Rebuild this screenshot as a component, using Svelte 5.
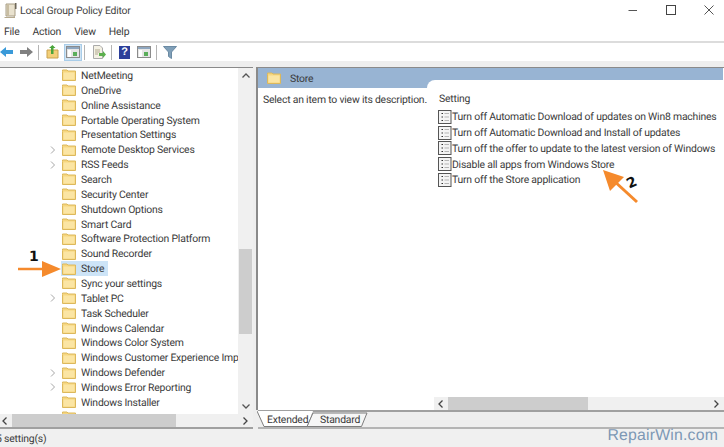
<script>
  const tree = [
    ['NetMeeting', 0], ['OneDrive', 0], ['Online Assistance', 0], ['Portable Operating System', 0],
    ['Presentation Settings', 0], ['Remote Desktop Services', 1], ['RSS Feeds', 1], ['Search', 0],
    ['Security Center', 0], ['Shutdown Options', 0], ['Smart Card', 0], ['Software Protection Platform', 0],
    ['Sound Recorder', 0], ['Store', 0], ['Sync your settings', 0], ['Tablet PC', 1], ['Task Scheduler', 0],
    ['Windows Calendar', 0], ['Windows Color System', 0], ['Windows Customer Experience Impr', 0],
    ['Windows Defender', 1], ['Windows Error Reporting', 1], ['Windows Installer', 0]
  ];
  const settings = [
    'Turn off Automatic Download of updates on Win8 machines',
    'Turn off Automatic Download and Install of updates',
    'Turn off the offer to update to the latest version of Windows',
    'Disable all apps from Windows Store',
    'Turn off the Store application'
  ];
</script>

{#snippet folder(cls)}
  <svg class={cls} viewBox="0 0 14 12" width="14" height="12">
    <path d="M0.5 2.5 V1 H5 L6 2 H13.5 V11.5 H0.5 Z" fill="#f6d67f" stroke="#dcb85c" />
    <rect x="1.5" y="3.5" width="11" height="7" fill="#fbe5a4" />
  </svg>
{/snippet}

<div class="window">
  <header class="title">
    <svg viewBox="0 0 14 16" width="14" height="16"><path d="M3 1 H12 V13 H3 Z" fill="#e9e2cf" stroke="#a89e86" /><path d="M1 14 H10 L12 13 V15 H2 Z" fill="#b5a98e" /><rect x="4" y="1" width="2" height="12" fill="#c8bda2" /><rect x="12" y="0" width="1.5" height="6" fill="#6d675a" /></svg>
    <span class="title-text">Local Group Policy Editor</span>
    <div class="winctl">
      <svg viewBox="0 0 10 10" width="10" height="10"><path d="M0.5 5.5 H9" stroke="#555" fill="none" /></svg>
      <svg viewBox="0 0 10 10" width="10" height="10"><rect x="0.5" y="0.5" width="9" height="9" stroke="#444" fill="none" /></svg>
      <svg viewBox="0 0 10 10" width="10" height="10"><path d="M0.5 0.5 L9.5 9.5 M9.5 0.5 L0.5 9.5" stroke="#555" fill="none" /></svg>
    </div>
  </header>

  <nav class="menu"><span>File</span><span>Action</span><span>View</span><span>Help</span></nav>

  <div class="toolbar">
    <svg class="tool first" viewBox="0 0 14 12" width="14" height="12"><path d="M0 6 L6 1 V4 H13 V8 H6 V11 Z" fill="#3a9ad9" /></svg>
    <svg class="tool fwd" viewBox="0 0 14 12" width="14" height="12"><path d="M14 6 L8 1 V4 H1 V8 H8 V11 Z" fill="#808080" /></svg>
    <i class="sep"></i>
    <svg class="tool up" viewBox="0 0 14 14" width="14" height="14"><path d="M1 5 H12 V13 H1 Z" fill="#f3cf78" stroke="#c9a24f" /><path d="M5 9 V3 H3 L6.5 0 L9.5 3 H7.5 V9 Z" fill="#4aa53c" /></svg>
    <span class="pressed"><svg viewBox="0 0 14 12" width="14" height="12"><rect x="0.5" y="0.5" width="13" height="11" fill="#e6e6e6" stroke="#8b8b8b" /><rect x="1" y="1" width="12" height="2" fill="#8ea6bf" /><rect x="2" y="4" width="3" height="7" fill="#fff" /><rect x="7" y="6" width="4" height="4" fill="#5bae5b" /></svg></span>
    <i class="sep s2"></i>
    <svg class="tool doc" viewBox="0 0 14 14" width="14" height="14"><path d="M1.5 0.5 H8 L10.5 3 V13.5 H1.5 Z" fill="#f4f1e4" stroke="#aaa" /><path d="M3 5 H8 M3 7 H8 M3 9 H6" stroke="#b0a98f" /><path d="M7 8 H11 V6 L14 9.5 L11 13 V11 H7 Z" fill="#5cb04e" /></svg>
    <i class="sep"></i>
    <span class="help">?</span>
    <svg class="tool view" viewBox="0 0 14 12" width="14" height="12"><rect x="0.5" y="0.5" width="13" height="11" fill="#e6e6e6" stroke="#8b8b8b" /><rect x="1" y="1" width="12" height="2" fill="#8ea6bf" /><rect x="2" y="4" width="3" height="7" fill="#fff" /><rect x="7" y="6" width="4" height="4" fill="#5bae5b" /></svg>
    <i class="sep"></i>
    <svg class="tool filter" viewBox="0 0 14 13" width="14" height="13"><path d="M0.5 0.5 H13.5 L8.5 6 V12.5 L5.5 10.5 V6 Z" fill="#7f9fb8" stroke="#6b8aa3" /></svg>
  </div>

  <main class="panes">
    <section class="left">
      <div class="tree-wrap">
        <ul class="tree">
          {#each tree as [name, expandable]}
            <li class="row">
              <span class="chev">{#if expandable}<svg viewBox="0 0 6 8" width="6" height="8"><path d="M1 0.5 L4.5 4 L1 7.5" stroke="#a6a6a6" fill="none" /></svg>{/if}</span>
              <span class="row-body" class:selected={name === 'Store'}>{@render folder('folder')}<span class="name">{name}</span></span>
            </li>
          {/each}
          <li class="row cut"><span class="chev"></span><span class="row-body">{@render folder('folder')}</span></li>
        </ul>
        <div class="vscroll">
          <svg viewBox="0 0 8 5" width="8" height="5"><path d="M0.5 4.5 L4 1 L7.5 4.5" stroke="#555" stroke-width="1.3" fill="none" /></svg>
          <div class="vtrack"><div class="vthumb"></div></div>
          <svg viewBox="0 0 8 5" width="8" height="5"><path d="M0.5 0.5 L4 4 L7.5 0.5" stroke="#555" stroke-width="1.3" fill="none" /></svg>
        </div>
      </div>
      <div class="hscroll">
        <svg viewBox="0 0 5 8" width="5" height="8"><path d="M4.5 0.5 L1 4 L4.5 7.5" stroke="#444" stroke-width="1.3" fill="none" /></svg>
        <div class="htrack"><div class="hthumb"></div></div>
        <svg viewBox="0 0 5 8" width="5" height="8"><path d="M0.5 0.5 L4 4 L0.5 7.5" stroke="#444" stroke-width="1.3" fill="none" /></svg>
      </div>
    </section>

    <section class="right">
      <div class="frame">
        <div class="band">
          {@render folder('band-folder')}
          <span>Store</span>
        </div>
        <div class="content">
          <p class="desc">Select an item to view its description.</p>
          <div class="list-card">
            <div class="list-head">Setting</div>
            <ul class="list">
              {#each settings as s}
                <li>
                  <svg viewBox="0 0 14 14" width="14" height="14"><rect x="0.5" y="0.5" width="12.5" height="13" fill="#f4f4f4" stroke="#555" /><path d="M3.5 3.5 H5 M3.5 7 H5 M3.5 10.5 H5" stroke="#333" /><path d="M6.5 3.5 H11 M6.5 7 H11 M6.5 10.5 H11" stroke="#b5b5b5" /></svg>
                  <span>{s}</span>
                </li>
              {/each}
            </ul>
          </div>
        </div>
        <div class="hscroll r">
          <svg viewBox="0 0 5 8" width="5" height="8"><path d="M4.5 0.5 L1 4 L4.5 7.5" stroke="#444" stroke-width="1.3" fill="none" /></svg>
          <div class="rthumb"></div>
          <svg class="rnext" viewBox="0 0 5 8" width="5" height="8"><path d="M0.5 0.5 L4 4 L0.5 7.5" stroke="#444" stroke-width="1.3" fill="none" /></svg>
        </div>
      </div>
      <div class="tabs">
        <svg class="tabshape" viewBox="0 0 115 17" width="115" height="17">
          <path d="M55 2 H110 L104.5 15.5 H50 Z" fill="#f6f6f6" stroke="#7d7d7d" />
          <path d="M0 0 L7 15.5 H50 L56 0 Z" fill="#fff" />
          <path d="M0 0 L7 15.5 H50 L56 2" fill="none" stroke="#7d7d7d" />
        </svg>
        <span class="tab one">Extended</span>
        <span class="tab two">Standard</span>
      </div>
    </section>
  </main>

  <footer class="status"><span>5 setting(s)</span></footer>

  <div class="note one-note">1</div>
  <svg class="arrow a1" viewBox="0 0 44 18" width="44" height="18"><path d="M0 9 H26" stroke="#f58a2c" stroke-width="2.5" /><path d="M24 1 L43 9 L24 17 Z" fill="#f58a2c" /></svg>
  <div class="note two-note">2</div>
  <svg class="arrow a2" viewBox="0 0 36 36" width="36" height="36"><path d="M10 10 L34 32" stroke="#f58a2c" stroke-width="3" /><path d="M0 0 L21 7 L7 21 Z" fill="#f58a2c" /></svg>
  <div class="mark">RepairWin.com</div>
</div>

<style>
  :global(body) { margin: 0; background: #fff; }
  ul { list-style: none; margin: 0; padding: 0; }
  .window {
    position: relative; width: 724px; height: 447px; overflow: hidden; background: #fff;
    font-family: Roboto, "Noto Sans", sans-serif; font-size: 10.4px; letter-spacing: -0.2px; color: #3a3a3a;
    text-rendering: geometricPrecision;
    display: flex; flex-direction: column;
  }
  .title { height: 21px; display: flex; align-items: center; padding-left: 3px; }
  .title svg { flex: none; }
  .title-text { margin-left: 3px; color: #444; }
  .winctl { margin-left: auto; display: flex; gap: 28px; padding-right: 10px; padding-bottom: 2px; }
  .menu { height: 20px; display: flex; gap: 13px; align-items: center; padding-left: 4px; border-bottom: 2px solid #dcdcdc; }
  .toolbar { height: 18px; display: flex; align-items: center; background: #fff; }
  .tool { flex: none; margin-left: 5px; }
  .tool.first { margin-left: 0; }
  .tool.up { margin-left: 7px; }
  .tool.doc { margin-left: 7px; }
  .tool.view { margin-left: 7px; }
  .tool.filter { margin-left: 6px; }
  .sep { width: 1px; height: 15px; background: #b4b4b4; margin-left: 5px; flex: none; }
  .sep.s2 { margin-left: 2px; }
  .pressed { flex: none; margin-left: 4px; width: 18px; height: 17px; background: #cfe3f3; border: 1px solid #a9cde9; box-sizing: border-box; display: flex; align-items: center; justify-content: center; }
  .help { flex: none; margin-left: 7px; width: 11px; height: 13px; background: #2c3f9a; color: #fff; font: bold 11px/13px "Liberation Sans", sans-serif; text-align: center; }
  .panes { flex: 1; min-height: 0; display: flex; background: #eeeeee; padding-top: 6px; gap: 3px; }
  .left { width: 253px; flex: none; display: flex; flex-direction: column; border-top: 1px solid #8a8a8a; border-bottom: 2px solid #a0a0a0; background: #fff; }
  .tree-wrap { flex: 1; min-height: 0; display: flex; overflow: hidden; }
  .tree { flex: 1; min-width: 0; overflow: hidden; padding-left: 50px; }
  .row { height: 14.87px; display: flex; align-items: center; white-space: nowrap; }
  .chev { width: 11px; flex: none; display: flex; align-items: center; }
  .row-body { display: inline-flex; align-items: center; height: 15px; padding-right: 4px; }
  .row-body.selected { background: #cde4f7; }
  .folder { flex: none; margin-right: 5px; margin-left: 1px; }
  .vscroll { width: 15px; flex: none; background: #f0f0f0; display: flex; flex-direction: column; align-items: center; padding: 5px 0; box-sizing: border-box; }
  .vtrack { flex: 1; width: 100%; padding-top: 171px; padding-bottom: 70px; box-sizing: border-box; display: flex; }
  .vthumb { flex: 1; background: #cdcdcd; margin: 0 1px; }
  .hscroll { height: 13px; flex: none; background: #f0f0f0; display: flex; align-items: center; padding: 0 5px 0 2px; }
  .htrack { flex: 1; height: 100%; padding: 0 67px 0 5px; box-sizing: border-box; display: flex; }
  .hthumb { flex: 1; background: #cdcdcd; }
  .right { flex: 1; min-width: 0; display: flex; flex-direction: column; }
  .frame { flex: 1; min-height: 0; border-top: 1px solid #8a8a8a; border-left: 2px solid #8a8a8a; display: flex; flex-direction: column; background: #fff; }
  .band { height: 20px; background: #98b4d3; display: flex; align-items: center; padding-left: 9px; gap: 9px; margin-right: 1px; }
  .band-folder { flex: none; }
  .content { flex: 1; min-height: 0; display: flex; padding-left: 5px; }
  .desc { margin: 5px 0 0; width: 164px; flex: none; white-space: nowrap; }
  .list-card { flex: 1; margin-top: -8px; background: #fff; border-top-left-radius: 8px; padding-left: 12px; }
  .list-head { margin-top: 8px; height: 21px; display: flex; align-items: center; }
  .list li { height: 15.75px; display: flex; align-items: center; gap: 0; white-space: nowrap; margin-left: -1px; }
  .list svg { flex: none; }
  .hscroll.r { margin-left: 176px; padding: 0 5px 0 4px; }
  .rthumb { width: 140px; height: 100%; background: #cdcdcd; margin-left: 5px; }
  .rnext { margin-left: auto; }
  .tabs { height: 15px; flex: none; background: #eeeeee; border-top: 2px solid #a0a0a0; border-bottom: 2px solid #b4b4b4; position: relative; margin-left: 2px; }
  .tabshape { position: absolute; left: -1px; top: -1px; }
  .tab { position: absolute; top: 0; line-height: 15px; }
  .tab.one { left: 9px; }
  .tab.two { left: 62px; }
  .status { height: 18px; flex: none; background: #f0f0f0; display: flex; align-items: center; margin-left: -4px; }
  .note { position: absolute; font: bold 14px/14px "DejaVu Sans", sans-serif; letter-spacing: 0; color: #111; }
  .one-note { left: 29px; top: 250px; }
  .two-note { left: 627px; top: 176px; transform: rotate(-25deg); }
  .arrow { position: absolute; }
  .a1 { left: 18px; top: 260px; }
  .a2 { left: 603px; top: 170px; }
  .mark { position: absolute; right: 6px; bottom: 2px; font: 15.8px "Liberation Sans", Arial, sans-serif; letter-spacing: 0.2px; color: #7d98b5; }
</style>
